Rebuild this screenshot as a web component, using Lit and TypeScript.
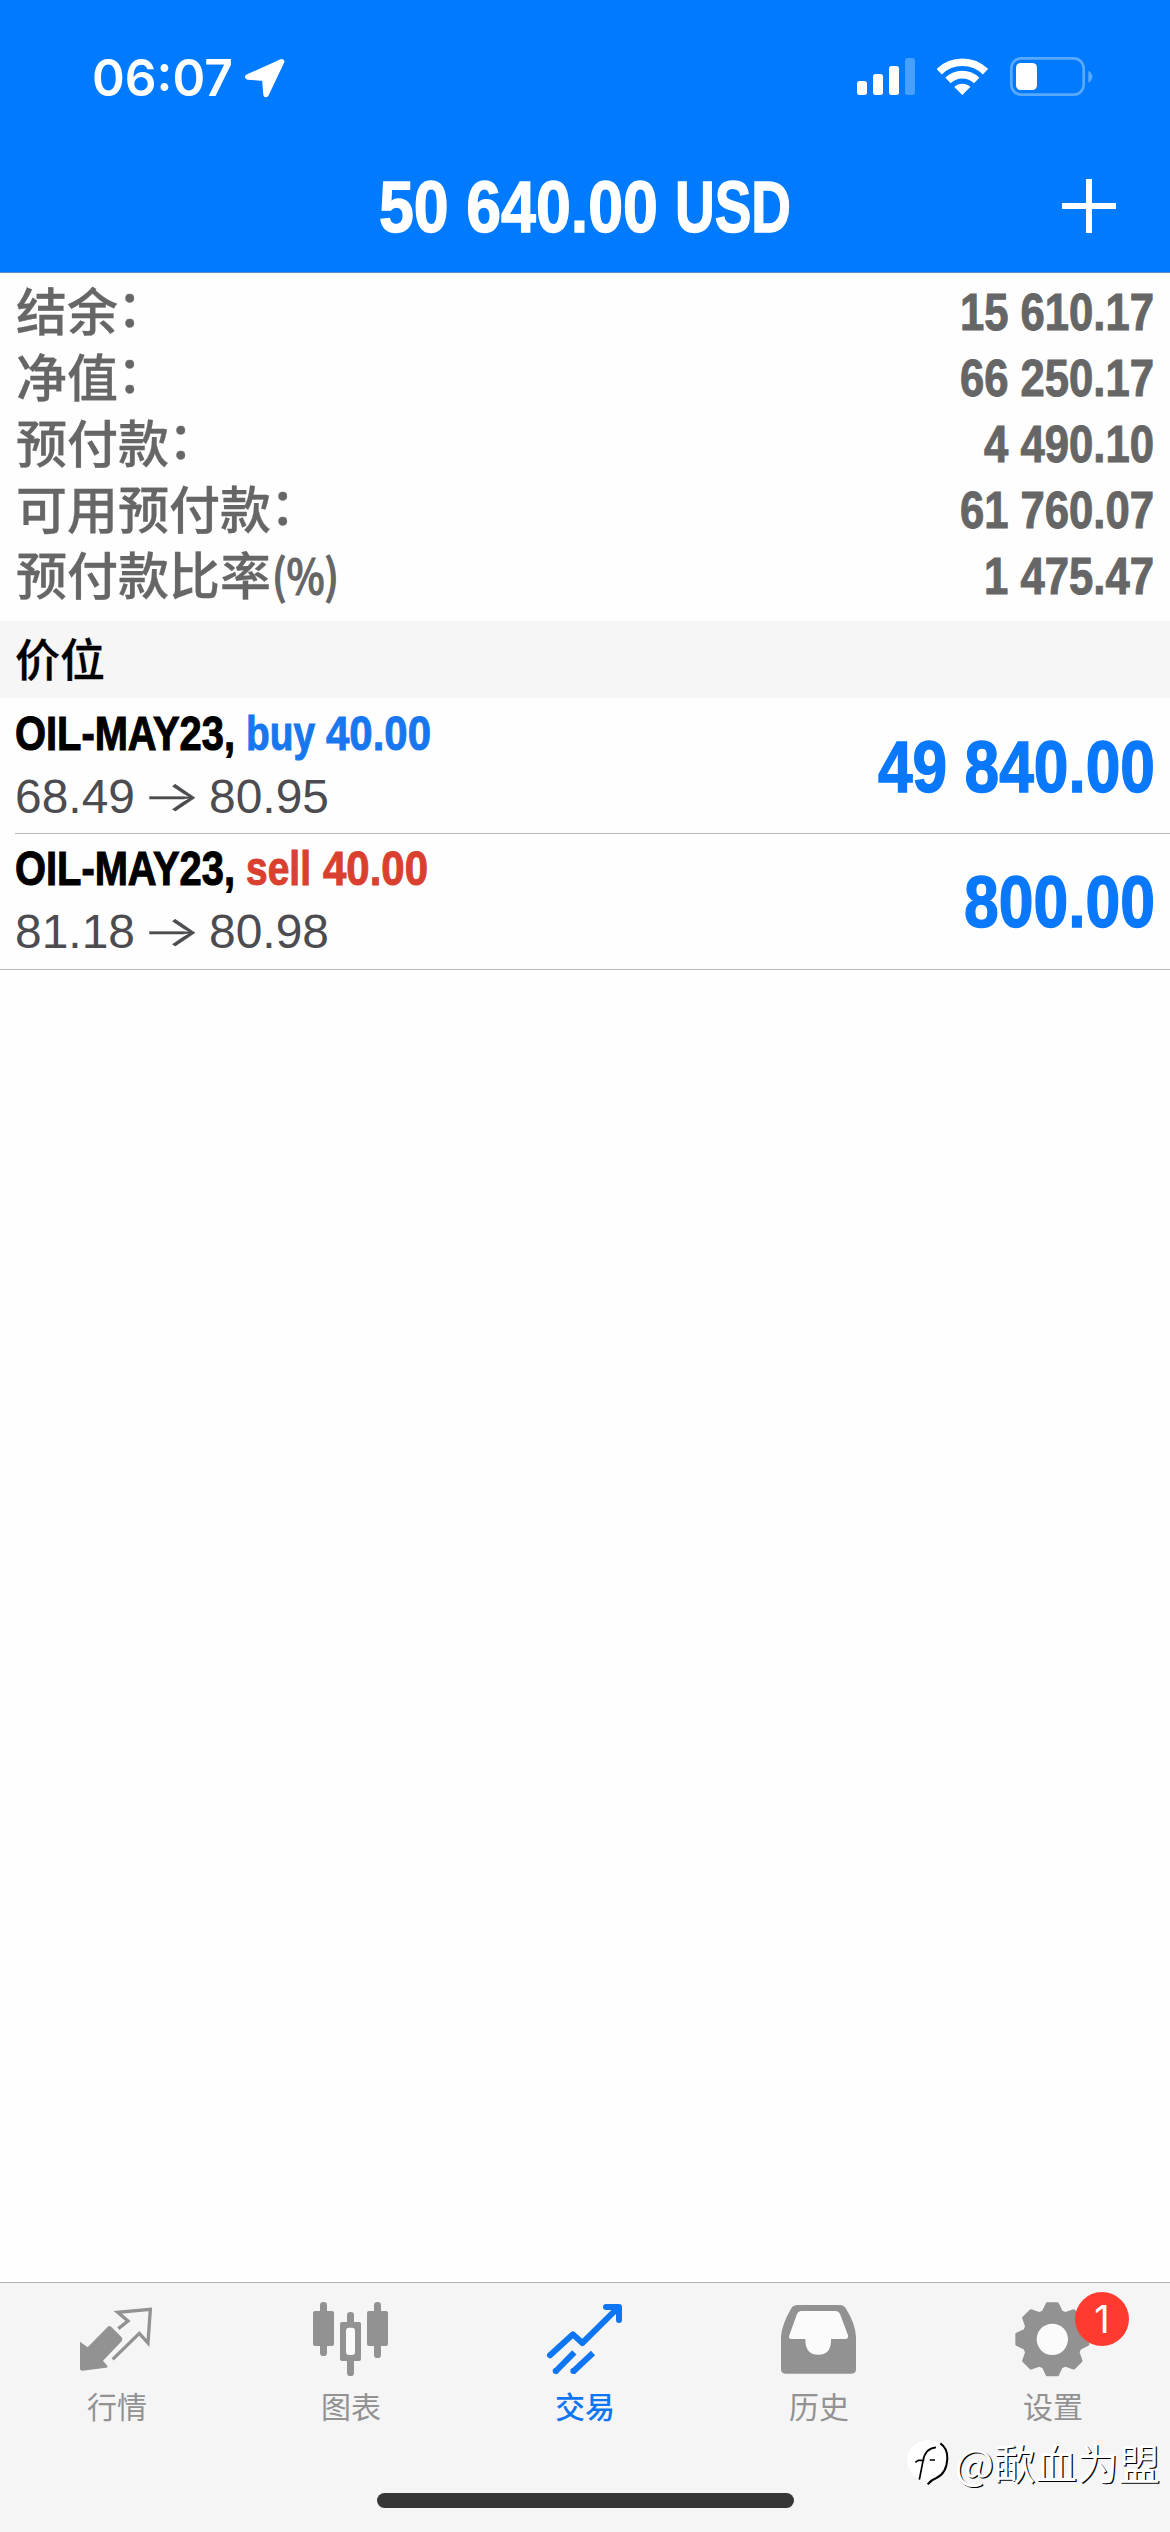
import { LitElement, html, svg, css } from "lit";
import { customElement, property } from "lit/decorators.js";

/** A run of text condensed or widened to an exact advance width. */
@customElement("fit-text")
class FitText extends LitElement {
  @property() text = "";
  @property({ type: Number }) size = 48;
  @property({ type: Number }) width = 100;
  @property({ type: Number }) gap = 0;
  @property({ type: Number }) stroke = 0;
  static styles = css`
    :host { display: block; flex: none; }
    svg { display: block; overflow: visible; }
    text { fill: currentColor; stroke: currentColor; white-space: pre; }
  `;
  updated() {
    const el = this.renderRoot.querySelector("text") as SVGTextElement;
    const natural = el.getComputedTextLength();
    if (natural > 0) el.setAttribute("transform", `scale(${this.width / natural} 1)`);
  }
  render() {
    const h = Math.round(this.size * 1.2);
    return html`<svg width=${this.width} height=${h} style="margin-left:${this.gap}px">
      <text x="0" y=${this.size} font-size=${this.size} stroke-width=${this.stroke}>${this.text}</text>
    </svg>`;
  }
}

type Run = [text: string, width: number, gap?: number];
const runs = (list: Run[], size: number, stroke = 0) =>
  list.map(([t, w, g]) => html`<fit-text .text=${t} .width=${w} .gap=${g ?? 0} .size=${size} .stroke=${stroke}></fit-text>`);

const gearPath = () => {
  const pts: string[] = [];
  const at = (deg: number, r: number) => {
    const a = (deg * Math.PI) / 180;
    pts.push(`${(517 + r * Math.sin(a)).toFixed(1)},${(208 - r * Math.cos(a)).toFixed(1)}`);
  };
  for (let i = 0; i < 8; i++) {
    at(i * 45 - 18, 86);
    at(i * 45 - 8, 107);
    at(i * 45 + 8, 107);
    at(i * 45 + 18, 86);
  }
  return "M" + pts.join("L") + "Z";
};

const icons = {
  quotes: { box: "111 90 240 240", art: svg`
    <path fill="currentColor" d="M120 215L143 232L202 172Q208 165 214 171L245 202Q250 208 245 214L189 272L203 289Q203 293 198 293L127 302Q120 302 120 296Z"/>
    <path fill="none" stroke="currentColor" stroke-width="10" d="M235 176L264 153L233 127L331 118L324 219L298 190L218 268"/>` },
  chart: { box: "813 90 240 240", art: svg`
    <g fill="currentColor"><rect x="819" y="123" width="63" height="105" rx="6"/><rect x="840" y="96" width="21" height="162" rx="10"/>
    <rect x="900" y="156" width="63" height="117" rx="6"/><rect x="921" y="126" width="21" height="192" rx="10"/>
    <rect x="981" y="123" width="63" height="105" rx="6"/><rect x="1002" y="96" width="21" height="168" rx="10"/></g>
    <rect x="918" y="173" width="27" height="82" rx="9" fill="#fbfbfb"/>` },
  trade: { box: "135 90 240 240", art: svg`
    <g fill="none" stroke="currentColor" stroke-width="18"><path stroke-linecap="round" stroke-linejoin="round" d="M150 256L219 193L247 219L355 112M318 111H357V150"/>
    <path d="M165 306L223 247M218 306L279 249"/></g>
    <circle cx="167" cy="303" r="9" fill="currentColor"/><circle cx="220" cy="303" r="9" fill="currentColor"/>` },
  history: { box: "837 90 240 240", art: svg`
    <path fill="currentColor" d="M893 105H1020Q1032 105 1038 116Q1066 160 1068 200V298Q1068 311 1055 311H856Q843 311 843 298V200Q845 165 873 116Q879 105 893 105Z"/>
    <path fill="#fbfbfb" d="M903 123H1006Q1016 123 1020 132L1044 196Q1046 207 1036 207H993V215Q991 254 955 254Q919 254 916 215V207H874Q864 207 868 196L891 132Q895 123 903 123Z"/>` },
  settings: { box: "399 90 240 240", art: svg`
    <path d=${gearPath()} fill="currentColor" stroke="currentColor" stroke-width="10" stroke-linejoin="round"/>
    <circle cx="517" cy="208" r="47" fill="#fbfbfb"/>` },
};

@customElement("app-root")
class AppRoot extends LitElement {
  static styles = css`
    :host { display: flex; flex-direction: column; position: relative; width: 1170px; height: 2532px; background: #fefefe; overflow: hidden;
      font-family: "Liberation Sans", "Noto Sans CJK SC", sans-serif; }
    svg { display: block; }
    .top { height: 272px; background: #007aff; color: #fff; border-bottom: 1px solid #5d8fc9; display: flex; flex-direction: column; }
    .status { display: flex; align-items: flex-start; height: 160px; box-sizing: border-box; padding: 45px 77px 0 92px; }
    .clock { font-family: Inter, sans-serif; font-weight: 600; }
    .loc { margin: 13px 0 0 11px; }
    .indicators { margin: 12px 0 0 auto; display: flex; gap: 22px; }
    .title { display: grid; grid-template-columns: 1fr auto 1fr; }
    .cond { display: flex; font-weight: 700; }
    .add { justify-self: end; margin: 19px 54px 0 0; }
    .summary { padding: 8px 16px 0; height: 348px; box-sizing: border-box; color: #666; }
    .line { display: flex; justify-content: space-between; height: 66px; }
    .label { display: flex; font: 500 51px/56px "Noto Sans CJK SC", sans-serif; -webkit-text-stroke: 0.3px #666; }
    .colon { position: relative; top: -4px; left: -1px; }
    .unit { margin: 2px 0 0 1px; }
    .value { margin-top: -3px; }
    .section { height: 77px; padding-left: 15px; background: #f6f6f6; color: #000; font: 500 45px/73px "Noto Sans CJK SC", sans-serif; -webkit-text-stroke: 0.3px #000; }
    .positions { padding-top: 1px; }
    .row { display: flex; justify-content: space-between; height: 134px; margin-left: 15px; padding-right: 15px; border-bottom: 1px solid #b8b8ba; }
    .row:last-child { margin-left: 0; padding-left: 15px; height: 135px; }
    .symbol { color: #000; padding-top: 2px; }
    .buy { color: #1877ee; display: flex; }
    .sell { color: #d9402f; display: flex; }
    .prices { display: flex; color: #4c4c50; margin-top: 5px; }
    .arrow { font-family: Inter, sans-serif; font-weight: 300; margin-top: 4px; }
    .profit { color: #0a78fb; padding-top: 21px; }
    .space { flex: 1; }
    .tabs { height: 249px; border-top: 1px solid #b0b0b2; background: #f5f5f5; display: flex; flex-direction: column; justify-content: space-between; align-items: center; }
    .tabrow { display: grid; grid-template-columns: repeat(5, 234px); color: #929292; }
    .tab { display: flex; flex-direction: column; align-items: center; padding-top: 17px; font: 400 30px/44px "Noto Sans CJK SC", sans-serif; }
    .tab.on { color: #0f76f3; font-weight: 500; }
    .icon { position: relative; margin-bottom: 3px; }
    .badge { position: absolute; left: 62px; top: -8px; width: 54px; height: 54px; border-radius: 50%; background: #ff3b30; color: #fff; font: 400 38px/54px Inter, sans-serif; text-align: center; }
    .home { width: 417px; height: 15px; border-radius: 8px; background: #363636; margin-bottom: 24px; }
    .mark { position: absolute; right: 10px; bottom: 42px; display: flex; align-items: center; color: #fff; gap: 4px; font: 400 41.5px/56px "Noto Sans CJK SC", sans-serif; text-shadow: 1.3px 1.3px 0 #000; }
  `;

  summary: [string, string, string, number][] = [
    ["结余", "：", "15 610.17", 194],
    ["净值", "：", "66 250.17", 194],
    ["预付款", "：", "4 490.10", 170],
    ["可用预付款", "：", "61 760.07", 194],
    ["预付款比率", "", "1 475.47", 170],
  ];

  positions = [
    { side: "buy", runs: [["buy", 69, 11], ["40.00", 105, 11]] as Run[], from: "68.49", to: "80.95", profit: "49 840.00", width: 277 },
    { side: "sell", runs: [["sell", 65, 11], ["40.00", 105, 12]] as Run[], from: "81.18", to: "80.98", profit: "800.00", width: 191 },
  ];

  tabs: [keyof typeof icons, string][] = [
    ["quotes", "行情"], ["chart", "图表"], ["trade", "交易"], ["history", "历史"], ["settings", "设置"],
  ];

  render() {
    return html`
      <header class="top">
        <div class="status">
          <div class="clock">${runs([["06:07", 141]], 51)}</div>
          <svg class="loc" width="42" height="42" viewBox="555 84 126 126"><path d="M668 95L566 141L617 145L621 194Z" fill="#fff" stroke="#fff" stroke-width="16" stroke-linejoin="round"/></svg>
          <div class="indicators">
            <svg width="58" height="40" viewBox="108 84 174 120" fill="#fff"><rect x="108" y="156" width="30" height="42" rx="8"/><rect x="156" y="135" width="30" height="63" rx="8"/><rect x="204" y="111" width="30" height="87" rx="8"/><rect x="252" y="87" width="30" height="111" rx="8" opacity=".28"/></svg>
            <svg width="51" height="40" viewBox="348 84 153 120" fill="none" stroke="#fff" stroke-width="23"><path d="M354.500 128A99.500 99.500 0 0 1 493.500 128"/><path d="M381 154.500A61.500 61.500 0 0 1 467 154.500"/><path d="M424 198L400 174A34 34 0 0 1 448 174Z" fill="#fff" stroke="none"/></svg>
            <svg width="83" height="40" viewBox="567 84 249 120"><rect x="571" y="88" width="217" height="109" rx="30" fill="none" stroke="#59a9ff" stroke-width="8"/><rect x="585" y="102" width="63" height="81" rx="14" fill="#fff"/><path d="M802 125Q814 132 814 143Q814 154 802 161Z" fill="#59a9ff"/></svg>
          </div>
        </div>
        <div class="title"><span></span>
          <div class="cond">${runs([["50 640.00", 279], ["USD", 116, 17]], 72.5, 1.4)}</div>
          <svg class="add" width="54" height="54" viewBox="0 0 54 54"><path d="M27 0V54M0 27H54" stroke="#fff" stroke-width="6"/></svg>
        </div>
      </header>
      <section class="summary">
        ${this.summary.map(([l, colon, v, w]) => html`<div class="line"><span class="label">${l}${colon ? html`<span class="colon">${colon}</span>` : html`<span class="unit">${runs([["(%)", 67]], 47, 1.2)}</span>`}</span><div class="cond value">${runs([[v, w]], 52, 1)}</div></div>`)}
      </section>
      <div class="section">价位</div>
      <section class="positions">
        ${this.positions.map((p) => html`<div class="row">
          <div>
            <div class="cond symbol">${runs([["OIL-MAY23,", 220]], 49, 1.1)}<span class=${p.side}>${runs(p.runs, 49, 1)}</span></div>
            <div class="prices">${runs([[p.from, 120]], 48)}<div class="arrow">${runs([["→", 59, 7]], 42, 0.4)}</div>${runs([[p.to, 120, 8]], 48)}</div>
          </div>
          <div class="cond profit">${runs([[p.profit, p.width]], 72.5, 1.4)}</div>
        </div>`)}
      </section>
      <div class="space"></div>
      <nav class="tabs">
        <div class="tabrow">
          ${this.tabs.map(([k, l]) => html`<div class="tab ${k === "trade" ? "on" : ""}">
            <div class="icon"><svg width="80" height="80" viewBox=${icons[k].box}>${icons[k].art}</svg>${k === "settings" ? html`<span class="badge">1</span>` : ""}</div>
            <span>${l}</span></div>`)}
        </div>
        <div class="home"></div>
      </nav>
      <div class="mark">
        <svg width="46" height="48" viewBox="78 525 138 144"><circle cx="145" cy="592" r="61" fill="#fff"/><path d="M184 541Q206 556 205 586Q203 632 172 645Q158 650 146 664" fill="none" stroke="#000" stroke-width="6"/><path d="M121 650L132 594Q138 556 171 553M109 598L118 592H136M152 591H168" fill="none" stroke="#000" stroke-width="5"/></svg>
        <span>@歃血为盟</span>
      </div>
    `;
  }
}
